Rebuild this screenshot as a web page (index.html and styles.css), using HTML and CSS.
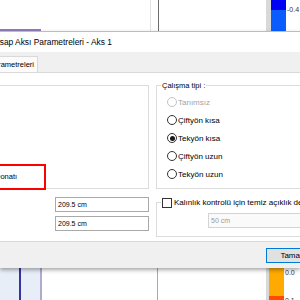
FILE: index.html
```html
<!DOCTYPE html>
<html lang="tr">
<head>
    <meta charset="UTF-8">
    <title>Hesap Aksı Parametreleri - Aks 1</title>
    <link rel="stylesheet" href="styles.css">
</head>
<body>

<div class="screen">
    <!-- uygulama arka planı -->
    <div class="app">
        <div class="app-top">
            <div class="plan-a"><div class="purple-line"></div></div>
            <div class="plan-b"></div>
            <div class="plan-c"></div>
            <div class="scale-strip"></div>
            <div class="scale-bar">
                <div class="seg seg-dark"></div>
                <div class="seg seg-light"></div>
            </div>
            <div class="scale-labels top-labels"><span>-0.4</span></div>
        </div>
        <div class="app-mid"></div>
        <div class="app-bottom">
            <div class="col-a"></div>
            <div class="col-line"></div>
            <div class="col-a"></div>
            <div class="col-line2"></div>
            <div class="col-c"></div>
            <div class="col-d"></div>
            <div class="scale-strip"></div>
            <div class="scale-bar">
                <div class="seg seg-orange"></div>
                <div class="seg seg-red"></div>
            </div>
            <div class="scale-labels bottom-labels"><span>0.0</span><span>0.1</span></div>
        </div>
    </div>

    <!-- dialog -->
    <div class="dialog">
        <div class="titlebar"><span class="title-text">Hesap Aksı Parametreleri - Aks 1</span></div>
        <div class="dlg-body">
            <div class="tabstrip">
                <div class="tab">Parametreleri</div>
            </div>
            <div class="tabpage">
                <div class="col-left">
                    <div class="group group-left">
                        <div class="red-mark">Donatı</div>
                    </div>
                    <div class="inputs">
                        <div class="textbox">209.5 cm</div>
                        <div class="textbox">209.5 cm</div>
                    </div>
                </div>
                <div class="col-right">
                    <div class="group group-type">
                        <div class="group-title">Çalışma tipi :</div>
                        <div class="radio-list">
                            <div class="radio-row disabled"><span class="radio"></span>Tanımsız</div>
                            <div class="radio-row"><span class="radio"></span>Çiftyön kısa</div>
                            <div class="radio-row"><span class="radio checked"></span>Tekyön kısa</div>
                            <div class="radio-row"><span class="radio"></span>Çiftyön uzun</div>
                            <div class="radio-row"><span class="radio"></span>Tekyön uzun</div>
                        </div>
                    </div>
                    <div class="group group-thick">
                        <div class="group-title check-title"><span class="checkbox"></span>Kalınlık kontrolü için temiz açıklık değeri</div>
                        <div class="textbox textbox-disabled">50 cm</div>
                    </div>
                </div>
            </div>
            <div class="footer">
                <div class="btn">Tamam</div>
            </div>
        </div>
    </div>
</div>

</body>
</html>
```

FILE: styles.css
```css
* {
    box-sizing: border-box;
}

body {
    margin: 0;
    font-family: "Liberation Sans", Arial, sans-serif;
    color: #000;
}

.screen {
    position: relative;
    width: 300px;
    height: 300px;
    overflow: hidden;
    background-color: #fff;
}

/* arka plan */
.app-top {
    display: flex;
    height: 31px;
}

.plan-a {
    width: 151px;
    border-right: 1px solid #e2e2e2;
    display: flex;
    flex-direction: column;
    justify-content: flex-end;
}

.purple-line {
    width: 41px;
    height: 2px;
    background-color: #8f7bb8;
}

.plan-b {
    width: 8px;
    border-right: 1px solid #6e6e6e;
}

.plan-c {
    width: 107px;
}

.scale-strip {
    width: 5px;
    background-color: #d9d9d9;
}

.scale-bar {
    width: 15px;
    display: flex;
    flex-direction: column;
}

.seg-dark {
    height: 10px;
    background-color: #0000f5;
}

.seg-light {
    flex: 1;
    background-color: #0a5cff;
}

.seg-orange {
    flex: 1;
    background-color: #ffaa00;
}

.seg-red {
    height: 4px;
    background-color: #ff4a00;
}

.scale-labels {
    flex: 1;
    font-size: 7px;
    color: #333;
    padding-left: 1px;
}

.top-labels {
    padding-top: 6px;
}

.bottom-labels {
    display: flex;
    flex-direction: column;
    justify-content: space-between;
    padding-top: 1px;
    margin-bottom: -4px;
}

.app-mid {
    height: 237px;
}

.app-bottom {
    display: flex;
    height: 32px;
}

.col-a {
    width: 19px;
    background-color: #e8eef7;
}

.col-line {
    width: 2px;
    background-color: #3535a0;
}

.col-line2 {
    width: 2px;
    background-color: #b2a9cc;
}

.col-c {
    width: 116px;
    border-right: 1px solid #a9a9a9;
}

.col-d {
    width: 108px;
}

.app-bottom .scale-strip {
    width: 3px;
}

/* dialog */
.dialog {
    position: absolute;
    top: 31px;
    left: 0;
    width: 300px;
    height: 237px;
    border-top: 1px solid #bdbdbd;
    box-shadow: 0 2px 4px rgba(0, 0, 0, 0.35);
    display: flex;
    flex-direction: column;
    font-size: 8px;
}

.titlebar {
    height: 20px;
    background-color: #fff;
    display: flex;
    align-items: center;
    font-size: 8.4px;
}

.title-text {
    margin-left: -11px;
    white-space: nowrap;
}

.dlg-body {
    flex: 1;
    background-color: #f0f0f0;
    display: flex;
    flex-direction: column;
}

.tabstrip {
    height: 20px;
    display: flex;
    align-items: flex-end;
}

.tab {
    height: 16px;
    margin-left: -14px;
    padding: 0 3px 0 2px;
    border: 1px solid #d9d9d9;
    border-bottom: none;
    background-color: #fbfbfb;
    font-size: 7.5px;
    line-height: 15px;
}

.tabpage {
    height: 170px;
    background-color: #fff;
    border-top: 1px solid #d9d9d9;
    border-bottom: 1px solid #d9d9d9;
    display: flex;
    gap: 7px;
    padding-top: 12px;
}

.col-left {
    width: 159px;
    margin-left: -10px;
    flex-shrink: 0;
}

.col-right {
    width: 200px;
    flex-shrink: 0;
}

.group {
    position: relative;
    border: 1px solid #dcdcdc;
}

.group-left {
    height: 104px;
}

.red-mark {
    position: absolute;
    left: 0;
    top: 78px;
    width: 55px;
    height: 26px;
    border: 2px solid #ff0000;
    padding-left: 2px;
    font-size: 7.5px;
    line-height: 22px;
}

.inputs {
    display: flex;
    flex-direction: column;
    gap: 4px;
    margin-top: 8px;
    padding-left: 65px;
}

.textbox {
    width: 94px;
    height: 15px;
    border: 1px solid #a9a9a9;
    background-color: #fff;
    font-size: 7px;
    line-height: 13px;
    padding-left: 2px;
}

.group-title {
    position: absolute;
    top: -5px;
    left: 4px;
    background-color: #fff;
    padding: 0 1px;
    font-size: 7.5px;
    line-height: 9px;
}

.group-type {
    height: 104px;
}

.radio-list {
    padding: 7px 0 0 10px;
}

.radio-row {
    display: flex;
    align-items: center;
    height: 18px;
    font-size: 8px;
}

.radio {
    width: 10px;
    height: 10px;
    border: 1px solid #333;
    border-radius: 50%;
    background-color: #fff;
    margin-right: 1px;
    display: flex;
    align-items: center;
    justify-content: center;
}

.radio.checked::after {
    content: "";
    width: 5px;
    height: 5px;
    border-radius: 50%;
    background-color: #1a1a1a;
}

.radio-row.disabled {
    color: #a3a3a3;
}

.radio-row.disabled .radio {
    border-color: #c4c4c4;
}

.group-thick {
    margin-top: 13px;
    height: 35px;
    padding: 10px 0 0 51px;
}

.check-title {
    top: -6px;
    left: 4px;
    display: flex;
    align-items: center;
    font-size: 8px;
    line-height: 11px;
    white-space: nowrap;
}

.checkbox {
    width: 10px;
    height: 10px;
    border: 1px solid #333;
    background-color: #fff;
    margin-right: 2px;
}

.textbox-disabled {
    width: 120px;
    border-color: #d4d4d4;
    background-color: #fafafa;
    color: #9a9a9a;
}

.footer {
    flex: 1;
    display: flex;
    padding: 6px 0 0 266px;
}

.btn {
    width: 55px;
    height: 15px;
    flex-shrink: 0;
    border: 1px solid #0078d7;
    background-color: #e1e1e1;
    text-align: center;
    font-size: 8px;
    line-height: 13px;
}
```
